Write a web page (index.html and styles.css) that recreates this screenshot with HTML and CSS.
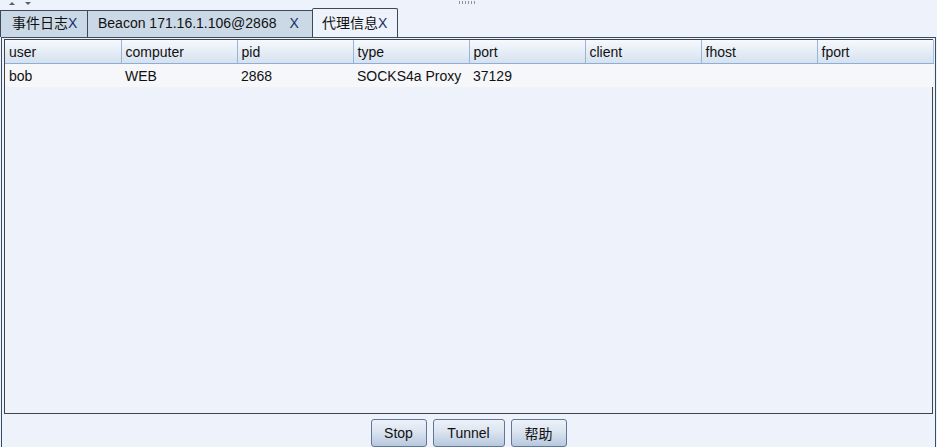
FILE: index.html
```html
<!DOCTYPE html>
<html lang="zh-cn">
<head>
    <meta charset="UTF-8">
    <title>代理信息</title>
    <link rel="stylesheet" href="styles.css">
</head>
<body>
    <div class="topbar">
        <span class="arrow up"></span>
        <span class="arrow down"></span>
        <span class="grip"></span>
    </div>
    <div class="tabs">
        <div class="tab">事件日志<span class="x">X</span></div>
        <div class="tab wide">Beacon 171.16.1.106@2868<span class="x gap">X</span></div>
        <div class="tab active">代理信息<span class="x">X</span></div>
    </div>
    <div class="panel">
        <div class="table-box">
            <table class="grid">
                <thead>
                    <tr>
                        <th>user</th>
                        <th>computer</th>
                        <th>pid</th>
                        <th>type</th>
                        <th>port</th>
                        <th>client</th>
                        <th>fhost</th>
                        <th>fport</th>
                    </tr>
                </thead>
                <tbody>
                    <tr>
                        <td>bob</td>
                        <td>WEB</td>
                        <td>2868</td>
                        <td>SOCKS4a Proxy</td>
                        <td>37129</td>
                        <td></td>
                        <td></td>
                        <td></td>
                    </tr>
                </tbody>
            </table>
        </div>
        <div class="buttons">
            <button class="btn stop">Stop</button>
            <button class="btn tunnel">Tunnel</button>
            <button class="btn help">帮助</button>
        </div>
    </div>
</body>
</html>
```

FILE: styles.css
```css
body {
    margin: 0;
    width: 937px;
    height: 447px;
    overflow: hidden;
    background-color: #eef2fa;
    font-family: "Liberation Sans", Arial, "Noto Sans CJK SC", sans-serif;
    font-size: 14px;
    color: #111;
}
.topbar {
    position: relative;
    height: 8px;
}
.arrow {
    position: absolute;
    top: 2px;
    width: 0;
    height: 0;
    border-left: 3px solid transparent;
    border-right: 3px solid transparent;
}
.arrow.up {
    left: 9px;
    border-bottom: 3px solid #556070;
}
.arrow.down {
    left: 25px;
    border-top: 3px solid #556070;
}
.grip {
    position: absolute;
    left: 458px;
    top: 1px;
    width: 18px;
    height: 3px;
    background-image: radial-gradient(circle, #8a95a5 0.6px, transparent 0.8px);
    background-size: 3px 2px;
}
.tabs {
    display: flex;
    align-items: flex-end;
    height: 29px;
}
.tab {
    box-sizing: border-box;
    width: 87px;
    height: 27px;
    line-height: 25px;
    padding: 0 0 0 11px;
    background: #cbd9e7;
    border: 1px solid #3a4a5c;
    border-bottom: none;
    border-right: none;
    white-space: nowrap;
}
.tab.wide {
    padding-left: 10px;
    width: 225px;
}
.tab.active {
    height: 29px;
    line-height: 28px;
    padding-left: 9px;
    width: 86px;
    background: #eef2fa;
    border-right: 1px solid #3a4a5c;
    border-radius: 2px 2px 0 0;
}
.tab .x {
    color: #12306a;
}
.tab .x.gap {
    margin-left: 13px;
}
.panel {
    box-sizing: border-box;
    margin-left: 1px;
    width: 935px;
    height: 420px;
    border: 1px solid #3a4c62;
    border-bottom: none;
    padding: 1px 2px 0 2px;
}
.table-box {
    box-sizing: border-box;
    height: 375px;
    border: 1px solid #3f4449;
    background: #eef2fa;
}
.grid {
    border-collapse: collapse;
    table-layout: fixed;
    width: 928px;
}
.grid th {
    width: 116px;
    height: 23px;
    padding: 1px 0 0 4px;
    text-align: left;
    font-weight: normal;
    background: linear-gradient(#f6f9fd, #d5e1ef);
    border-right: 1px solid #9ab5d3;
    border-bottom: 1px solid #8eaed6;
    box-sizing: border-box;
}
.grid th:last-child {
    border-right: 1px solid #a8bfda;
}
.grid td {
    height: 22px;
    padding: 1px 0 0 4px;
    background: #f6f7fb;
    white-space: nowrap;
}
.buttons {
    display: flex;
    justify-content: center;
    gap: 6px;
    padding-top: 5px;
}
.btn {
    box-sizing: border-box;
    height: 28px;
    padding: 0;
    font-family: "Liberation Sans", Arial, "Noto Sans CJK SC", sans-serif;
    font-size: 14px;
    color: #111;
    background: linear-gradient(#edf2f9, #dbe4f0 45%, #b7c8dd);
    border: 1px solid #60769a;
    border-radius: 3px;
}
.btn.stop {
    width: 56px;
}
.btn.tunnel {
    width: 72px;
}
.btn.help {
    width: 56px;
}
```
